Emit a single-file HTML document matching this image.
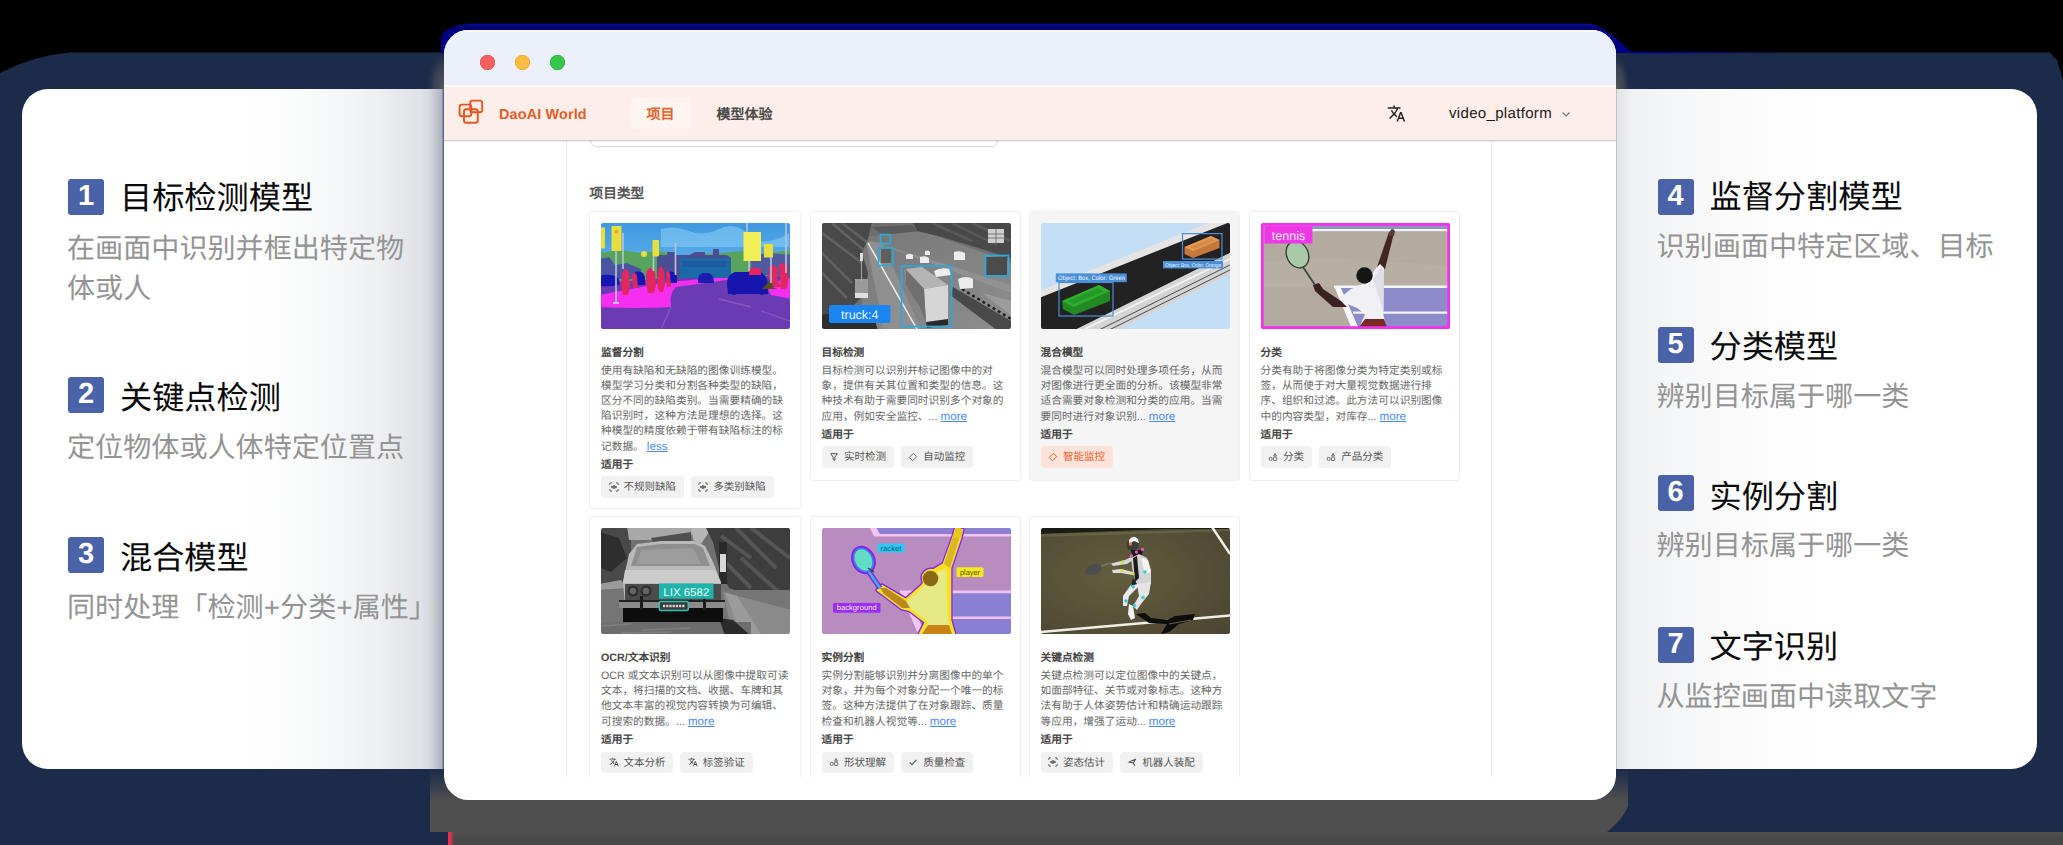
<!DOCTYPE html>
<html lang="zh-CN">
<head>
<meta charset="utf-8">
<title>DaoAI World</title>
<style>
*{box-sizing:border-box;margin:0;padding:0}
html,body{width:2063px;height:845px;overflow:hidden;background:#000}
body{position:relative;font-family:"Liberation Sans",sans-serif;color:#000;text-rendering:geometricPrecision}
.abs{position:absolute}
#bg{position:absolute;left:0;top:0;width:2063px;height:845px}
/* side cards */
#lcard{position:absolute;left:22px;top:89px;width:430px;height:680px;border-radius:26px 0 0 26px;
 background:linear-gradient(90deg,#fff 0,#fff 51.600%,#fafbfb 64.900%,#f3f4f6 76.500%,#eeeff1 83.300%,#e6e8ec 87.900%,#e0e2e7 92.600%,#d8dbe1 94.400%,#c5c9d1 96%,#aeb2ba 97.700%,#4f6590 97.950%,#4f6590 100%)}
#rcard{position:absolute;left:1610px;top:89px;width:427px;height:680px;border-radius:0 26px 26px 0;
 background:linear-gradient(90deg,#8a93a8 0,#8a93a8 1.400%,#e2e3e6 1.600%,#f0f1f3 4.900%,#f5f6f8 15.500%,#fafafa 27.200%,#fdfdfd 38.900%,#fff 50.800%,#fff 100%)}
.item{position:absolute;left:0;width:420px}
.badge{position:absolute;left:0;top:0;width:36px;height:36px;border-radius:3px;background:#4a62a8;color:#fff;
 font-weight:700;font-size:29px;line-height:35px;text-align:center}
.ttl{position:absolute;left:52px;top:-4.800px;font-size:32.200px;line-height:44px;font-weight:500;color:#0a0a0a;letter-spacing:0;white-space:nowrap}
.dsc{position:absolute;left:-1px;top:49px;width:352px;font-size:28.100px;line-height:40px;font-weight:300;color:#949494;letter-spacing:0}
/* window */
#win{position:absolute;left:444px;top:30px;width:1172px;height:770px;border-radius:24.500px;background:#fff;overflow:hidden}
#tbar{position:absolute;left:0;top:0;width:100%;height:56.5px;background:#ecf0fa;box-shadow:inset 0 1.5px 0 #fbfcfe}
.tl{position:absolute;top:25.200px;width:15px;height:15px;border-radius:50%}
#nav{position:absolute;left:-1px;top:57px;width:1174px;height:52.500px;background:#fdeee9;box-shadow:0 1px 1.500px rgba(0,0,0,.26),0 -1.500px 0 #fafbfd}
#content{position:absolute;left:-1.500px;top:110px;width:1174px;height:636.700px;overflow:hidden;background:#fff}
.card{position:absolute;overflow:hidden;width:211.5px;border:1px solid #efefef;border-radius:4px;background:#fff;padding:11px 11px 0 11px;
 font-size:10.700px;line-height:15px;color:#666;box-shadow:0 0 2px rgba(0,0,0,.04)}
.card svg.im{display:block;width:189px;height:106px;border-radius:2px}
.card h4{font-size:10.700px;line-height:15px;font-weight:700;color:#444;margin-top:17px}
.card p{margin-top:3px;letter-spacing:0.02px}
.card a{color:#4a8af0;text-decoration:underline;font-size:11.600px}
.card h5{font-size:10.700px;line-height:15px;font-weight:700;color:#444;margin-top:3px}
.tags{margin-top:3.700px;white-space:nowrap;font-size:0}
.tag{display:inline-block;height:21.600px;line-height:23.200px;padding:0 7.800px;margin-right:6.800px;background:#f1f1f1;border-radius:4px;
 font-size:10.500px;color:#555;vertical-align:top}
.tag svg{width:10px;height:10px;vertical-align:-1.500px;margin-right:4.800px}
</style>
</head>
<body>
<!-- background shapes -->
<svg id="bg" viewBox="0 0 2063 845">
 <defs>
  <linearGradient id="gg" x1="0" y1="0" x2="0" y2="1"><stop offset="0" stop-color="#4f4f4f"/><stop offset=".72" stop-color="#4f4f4f"/><stop offset=".85" stop-color="#494949"/><stop offset="1" stop-color="#464646"/></linearGradient>
 <linearGradient id="fd" x1="0" y1="769" x2="0" y2="800" gradientUnits="userSpaceOnUse"><stop offset="0" stop-color="#4f4f4f" stop-opacity="0"/><stop offset=".5" stop-color="#4f4f4f" stop-opacity=".45"/><stop offset="1" stop-color="#4f4f4f" stop-opacity="1"/></linearGradient>
 <linearGradient id="rs" x1="448" y1="0" x2="454" y2="0" gradientUnits="userSpaceOnUse"><stop offset="0" stop-color="#ea3049"/><stop offset=".35" stop-color="#ea3049"/><stop offset="1" stop-color="#ea3049" stop-opacity="0"/></linearGradient>
 <linearGradient id="bln" x1="1630" y1="0" x2="1780" y2="0" gradientUnits="userSpaceOnUse"><stop offset="0" stop-color="#000090"/><stop offset=".4" stop-color="#000090" stop-opacity=".7"/><stop offset="1" stop-color="#000090" stop-opacity="0"/></linearGradient>
 <radialGradient id="halo"><stop offset="0" stop-color="#6a6660" stop-opacity=".75"/><stop offset=".6" stop-color="#5a5a60" stop-opacity=".45"/><stop offset="1" stop-color="#3a4258" stop-opacity="0"/></radialGradient>
 <linearGradient id="bl" x1="0" y1="23" x2="0" y2="31" gradientUnits="userSpaceOnUse"><stop offset="0" stop-color="#000d7a"/><stop offset=".25" stop-color="#000f92"/><stop offset=".6" stop-color="#00005a"/><stop offset=".85" stop-color="#000082"/><stop offset="1" stop-color="#000082"/></linearGradient>
 </defs>
 <rect width="2063" height="845" fill="#000"/>
 <path d="M0 73 C18 64 40 55 70 52.5 L2050 52.5 L2057 60 L2063 80 L2063 845 L0 845 Z" fill="#1c2b49"/>
 <path d="M430 800 L1628 800 L1628 806 Q1624 818 1607 832 L2063 832 L2063 845 L448 845 L448 832 L430 832 Z" fill="url(#gg)"/>
 <rect x="430" y="769" width="45" height="31.500" fill="url(#fd)"/><rect x="1585" y="769" width="43" height="31.500" fill="url(#fd)"/>
 <rect x="448" y="832" width="6" height="13" fill="url(#rs)"/>
 <!-- blue glow on top of window -->
 <path d="M441 53.500 L441 40 C441.500 30 452 23.500 477 23.500 L1588 23.500 C1600 24 1612 34 1632 52.600 L1616 52.600 L1616 62 L444 62 L444 53.500 Z" fill="url(#bl)"/>
 <rect x="1630" y="51.700" width="150" height="1.700" fill="url(#bln)"/>
 <ellipse cx="444" cy="89" rx="17" ry="38" fill="url(#halo)"/><ellipse cx="1616" cy="89" rx="14" ry="36" fill="url(#halo)"/>
</svg>

<div id="lcard">
 <div class="item" style="left:46px;top:90px"><div class="badge">1</div><div class="ttl" style="top:-3.1px">目标检测模型</div><div class="dsc" style="top:49.5px">在画面中识别并框出特定物体或人</div></div>
 <div class="item" style="left:46px;top:288px"><div class="badge">2</div><div class="ttl" style="top:-1.4px">关键点检测</div><div class="dsc" style="top:51.0px">定位物体或人体特定位置点</div></div>
 <div class="item" style="left:46px;top:448px"><div class="badge">3</div><div class="ttl" style="top:-1.4px">混合模型</div><div class="dsc" style="top:51.0px;width:380px;white-space:nowrap">同时处理「检测+分类+属性」</div></div>
</div>
<div id="rcard">
 <div class="item" style="left:47.500px;top:90px"><div class="badge">4</div><div class="ttl" style="top:-4.0px">监督分割模型</div><div class="dsc" style="top:47.7px;white-space:nowrap">识别画面中特定区域、目标</div></div>
 <div class="item" style="left:47.500px;top:238px"><div class="badge">5</div><div class="ttl" style="top:-2.1px">分类模型</div><div class="dsc" style="top:49.5px">辨别目标属于哪一类</div></div>
 <div class="item" style="left:47.500px;top:386px"><div class="badge">6</div><div class="ttl" style="top:-0.1px">实例分割</div><div class="dsc" style="top:51.4px">辨别目标属于哪一类</div></div>
 <div class="item" style="left:47.500px;top:538px"><div class="badge">7</div><div class="ttl" style="top:-2.1px">文字识别</div><div class="dsc" style="top:49.5px">从监控画面中读取文字</div></div>
</div>

<div id="win">
 <div id="tbar">
  <div class="tl" style="left:35.700px;background:#fc5f5f;box-shadow:inset 0 0 0 .6px #e04848"></div>
  <div class="tl" style="left:70.500px;background:#fdbc40;box-shadow:inset 0 0 0 .6px #e0a030"></div>
  <div class="tl" style="left:105.500px;background:#34c84a;box-shadow:inset 0 0 0 .6px #28a83a"></div>
 </div>
 <div id="content">
<div class="abs" style="left:123px;top:0;width:1px;height:640px;background:#ececec"></div>
<div class="abs" style="left:1048px;top:0;width:1px;height:640px;background:#ececec"></div>
<div class="abs" style="left:147px;top:-20px;width:408px;height:27px;border:1px solid #dcdcdc;border-radius:7px;box-shadow:0 1px 2px rgba(0,0,0,.05)"></div>
<div class="abs" style="left:147px;top:44.800px;font-size:13.700px;line-height:18px;font-weight:700;color:#555;white-space:nowrap">项目类型</div>
<div class="card" style="left:146.5px;top:70.6px;height:298.500px;">
<!--im1--><svg class="im" viewBox="0 0 189 106"><defs><linearGradient id="sky1" x1="0" y1="0" x2="0" y2="1"><stop offset="0" stop-color="#3d97e0"/><stop offset="1" stop-color="#8fd2f6"/></linearGradient><filter id="b1"><feGaussianBlur stdDeviation=".55"/></filter></defs><g filter="url(#b1)"><rect x="-2" y="-2" width="193" height="110" fill="url(#sky1)"/><path d="M60 6q14-4 28 2t30-2 30 6 40-2v14H60z" fill="#7cc4f2" opacity=".7"/><path d="M-2 30 20 27 40 30 60 28 75 33 120 30 140 28 160 31 191 27V62H-2z" fill="#58a45e"/><path d="M56 32h10v-3h8v3h14l6-3h10v3h8v-6h6v6h8l4 3v22H56z" fill="#4a4f92"/><path d="M-2 36 8 34 14 42 26 40 40 46 40 56H-2z" fill="#4a55a0"/><path d="M150 34 165 30 191 32V52H150z" fill="#4f5aa0"/><path d="M-2 60 60 56 130 54 191 52V108H-2z" fill="#6a3bb3"/><path d="M-2 72 30 66 60 60 130 53 134 56 75 64Q68 70 70 84 40 86-2 84z" fill="#f52df0"/><path d="M191 54 165 62 170 72 191 76z" fill="#f52df0"/><path d="M79 35h48q3 0 3 4v16H79z" fill="#1f69a8"/><path d="M82 38h44v6H82z" fill="#18579a" opacity=".7"/><path d="M-2 53Q8 50 16 54 20 58 18 62 8 64-2 63zM34 49q8-2 10 5v8H35zM66 49q8-2 10 5v6h-9z" fill="#1717b4"/><path d="M97 60q-1-9 5-10h5q6 1 6 10z" fill="#1b1bb4"/><path d="M126 60q0-8 8-11h24q8 2 9 12v10h-4q-2 2-5 0h-22q-3 2-6 0h-3z" fill="#1717ae"/><g fill="#e2255f"><path d="M21 50q4-8 7 0l1 12-2 10h-5l-2-10zM31 52q3-5 5 1l1 12h-5zM45 50q4-10 9 0l1 12-2 8h-6l-2-10zM57 47q4-7 6 1l1 12-2 9h-4l-2-10zM65 50q2-5 4 1l1 13h-4zM148 46q6-3 12 0v6h-12zM168 44q6-4 9 2l-1 10 4 8h-8l-4-8zM178 42q6-5 9 2v16l-2 6h-5z"/></g><path d="M161 66 170 56 172 64 176 66z" fill="#55501e"/><g fill="#e6df3c"><rect x="10.500" y="3" width="10" height="25" rx="1"/><rect x="-1" y="4.500" width="5" height="21"/><rect x="51.500" y="17" width="6.500" height="16.500" rx="1"/><rect x="142.500" y="9" width="17.500" height="29" fill="#f2ee55"/><rect x="163" y="21" width="9" height="13.500"/><circle cx="43" cy="31" r="3"/></g><circle cx="15.500" cy="8.500" r="2" fill="#f5a030"/><g stroke="#b9c2dc" stroke-width="1.600" fill="none"><path d="M15 28V80M52.500 33V48M74.500 20V52M146 0V9M148 38V48M170 34V60M185 0V50M22 10V46"/></g><path d="M12 79h6v2h-6z" fill="#b9c2dc"/><g stroke="#8a62c8" stroke-width="1.300" opacity=".8"><path d="M70 84 60 106M118 76 150 84M160 88 189 98"/></g></g></svg><!--/im1-->
<h4>监督分割</h4><p>使用有缺陷和无缺陷的图像训练模型。模型学习分类和分割各种类型的缺陷，区分不同的缺陷类别。当需要精确的缺陷识别时，这种方法是理想的选择。这种模型的精度依赖于带有缺陷标注的标记数据。 <a>less</a></p><h5>适用于</h5>
<div class="tags"><span class="tag"><svg viewBox="0 0 12 12" fill="none" stroke="#555" stroke-width="1.200"><path d="M1 3.500V2.200A1.200 1.200 0 0 1 2.200 1H3.500M8.500 1H9.800A1.200 1.200 0 0 1 11 2.200V3.500M11 8.500V9.800A1.200 1.200 0 0 1 9.800 11H8.500M3.500 11H2.200A1.200 1.200 0 0 1 1 9.800V8.500"/><path d="M2.600 6Q6 2.600 9.400 6 6 9.400 2.600 6Z"/><circle cx="6" cy="6" r=".7" fill="#555"/></svg>不规则缺陷</span><span class="tag"><svg viewBox="0 0 12 12" fill="none" stroke="#555" stroke-width="1.200"><path d="M1 3.500V2.200A1.200 1.200 0 0 1 2.200 1H3.500M8.500 1H9.800A1.200 1.200 0 0 1 11 2.200V3.500M11 8.500V9.800A1.200 1.200 0 0 1 9.800 11H8.500M3.500 11H2.200A1.200 1.200 0 0 1 1 9.800V8.500"/><path d="M2.600 6Q6 2.600 9.400 6 6 9.400 2.600 6Z"/><circle cx="6" cy="6" r=".7" fill="#555"/></svg>多类别缺陷</span></div>
</div>
<div class="card" style="left:367px;top:70.6px;height:270.500px;">
<!--im2--><svg class="im" viewBox="0 0 189 106"><defs><filter id="b2"><feGaussianBlur stdDeviation=".7"/></filter><linearGradient id="rd2" x1="0" y1="0" x2="1" y2="1"><stop offset="0" stop-color="#777"/><stop offset="1" stop-color="#8e8e8e"/></linearGradient></defs><g filter="url(#b2)"><rect x="-2" y="-2" width="193" height="110" fill="#6e6e6e"/><path d="M40 14 100 8 191 40V108H40z" fill="url(#rd2)"/><path d="M44 18 60 20 100 108H62z" fill="#8f8f8f"/><path d="M46 17 189 62V70L60 22z" fill="#9a9a9a" opacity=".6"/><path d="M-2 -2H50L46 16 40 30 46 50 44 70 30 84 10 90-2 92z" fill="#4a4a4a"/><path d="M0 10 40 40M10 0 45 30M0 30 30 60M0 50 25 75M20 0 46 20" stroke="#777" stroke-width="2.500" opacity=".55"/><path d="M90-2H191V36L160 26 120 14 95 8z" fill="#4a4a4a"/><path d="M110 0 150 18M130 0 175 22M150 0 189 18" stroke="#6a6a6a" stroke-width="2.500" opacity=".5"/><path d="M50 4 90 2 95 8 60 12z" fill="#5a5a5a"/><path d="M-2 92 10 90 30 84 50 86 56 108H-2z" fill="#2e2e2e"/><path d="M131 64 189 98V108H176L128 72z" fill="#4a4a4a"/><path d="M140 66 189 96" stroke="#222" stroke-width="2.500" stroke-dasharray="3 3"/><path d="M160 70 189 78V92z" fill="#a0a0a0" opacity=".8"/><path d="M46 20 96 108" stroke="#f0f0f0" stroke-width="1.500" fill="none"/><path d="M82 47 100 44 127 62V100L106 103 100 84 84 62z" fill="#8a8a8a"/><path d="M84 46 100 44 126 62 102 66z" fill="#b4b4b4"/><path d="M102 66 126 62V98L104 101z" fill="#d6d6d6"/><path d="M84 47 102 66 104 100 98 84 84 62z" fill="#6f6f6f"/><path d="M104 99 126 96V102L105 105z" fill="#2a2a2a"/><rect x="59" y="26" width="10" height="14" fill="#5e5e5e"/><rect x="60" y="13" width="6" height="6" fill="#777"/><rect x="164" y="34" width="21" height="18" fill="#4c4c4c"/><path d="M132 29q6-2 11 1v7h-11zM136 56q8-4 15 0v9l-13 1zM112 48q6-4 15-2l2 6-15 2zM84 32q4-2 7 0v4h-7zM98 34q6-2 9 1v5h-9zM103 28q4-1 5 1v3h-5z" fill="#ededed"/><rect x="166" y="6" width="16" height="14" fill="#cfcfcf"/><path d="M166 11h16M166 15h16M174 6v14" stroke="#666" stroke-width=".8"/><rect x="33" y="56" width="13" height="18" fill="#9a9a9a"/><rect x="33" y="70" width="13" height="5" fill="#e0e0e0"/><rect x="38" y="30" width="3" height="8" fill="#ddd"/><path d="M39.500 38V58" stroke="#bbb" stroke-width=".8"/></g><g fill="none" stroke="#29a9dc" stroke-width="1.700"><rect x="79.500" y="43" width="50" height="60.500"/><rect x="56.500" y="25" width="14.500" height="17.500"/><rect x="58.500" y="11.500" width="10" height="9"/><rect x="163.500" y="32.500" width="23" height="20.500"/></g><rect x="7" y="82" width="61.500" height="18" rx="2" fill="#1b86f2"/><text x="37.800" y="96" font-family="Liberation Sans,sans-serif" font-size="12.500" fill="#eaf6ff" text-anchor="middle">truck:4</text></svg><!--/im2-->
<h4>目标检测</h4><p>目标检测可以识别并标记图像中的对象，提供有关其位置和类型的信息。这种技术有助于需要同时识别多个对象的应用，例如安全监控、... <a>more</a></p><h5>适用于</h5>
<div class="tags"><span class="tag"><svg viewBox="0 0 12 12" fill="none" stroke="#555" stroke-width="1.2"><path d="M2 2h8L7 6.200V10L5 9V6.200Z"/></svg>实时检测</span><span class="tag"><svg viewBox="0 0 12 12" fill="none" stroke="#666" stroke-width="1.1"><path d="M6.500 1.500 10.500 5.500 5.500 10.500 1.500 6.500Z"/></svg>自动监控</span></div>
</div>
<div class="card" style="left:586px;top:70.6px;height:270.500px;background:#f5f5f5;border-color:#f0f0f0;">
<!--im3--><svg class="im" viewBox="0 0 189 106"><defs><filter id="b3"><feGaussianBlur stdDeviation=".5"/></filter></defs><g filter="url(#b3)"><rect x="-2" y="-2" width="193" height="110" fill="#c3def5"/><path d="M-2 68 172-2H191L-2 76z" fill="#e4e4e4"/><path d="M-2 75 189-1V30L32 108H-2z" fill="#232323"/><path d="M32 108 191 29V50L74 108z" fill="#d4d4d4"/><path d="M56 108 191 41M66 108 191 46" stroke="#3a3a3a" stroke-width=".9" fill="none"/><path d="M44 106 191 35" stroke="#f4f4f4" stroke-width="1.600" fill="none"/><path d="M21 78 58 62 69 68V78L33 92 22 86z" fill="#238a23"/><path d="M21 78 58 62 69 68 33 84z" fill="#2fae2f"/><path d="M27 78 57 65 63 68.500 33 81z" fill="#279a27"/><path d="M143.500 24 170 13 178.500 17V25L152 35 143.500 31z" fill="#c4783a"/><path d="M143.500 24 170 13 178.500 17 152 28z" fill="#e29a55"/><path d="M149 24 170 15.500 174 17.500 153 26z" fill="#d58a47"/></g><rect x="18" y="59.500" width="54" height="33.500" fill="none" stroke="#4a8fd8" stroke-width="1.200"/><rect x="14.800" y="50.400" width="71" height="8.800" fill="#4a8fd8"/><text x="17" y="57.400" font-family="Liberation Sans,sans-serif" font-size="6.300" fill="#eef5ff" textLength="67" lengthAdjust="spacingAndGlyphs">Object: Box, Color: Green</text><rect x="141.500" y="10.600" width="39.500" height="25.500" fill="none" stroke="#4a8fd8" stroke-width="1.200"/><rect x="122" y="38" width="60" height="7.400" fill="#4a8fd8"/><text x="124" y="44" font-family="Liberation Sans,sans-serif" font-size="5.400" fill="#eef5ff" textLength="56" lengthAdjust="spacingAndGlyphs">Object: Box, Color: Orange</text></svg><!--/im3-->
<h4>混合模型</h4><p>混合模型可以同时处理多项任务，从而对图像进行更全面的分析。该模型非常适合需要对象检测和分类的应用。当需要同时进行对象识别... <a>more</a></p><h5>适用于</h5>
<div class="tags"><span class="tag" style="background:#fde3d9;color:#e8622c;font-weight:500"><svg viewBox="0 0 12 12" fill="none" stroke="#e8622c" stroke-width="1.2"><path d="M6.500 1.500 10.500 5.500 5.500 10.500 1.500 6.500Z"/></svg>智能监控</span></div>
</div>
<div class="card" style="left:806px;top:70.6px;height:270.500px;">
<!--im4--><svg class="im" viewBox="0 0 189 106"><defs><filter id="b4"><feGaussianBlur stdDeviation=".5"/></filter></defs><g filter="url(#b4)"><rect x="-2" y="-2" width="193" height="110" fill="#b3aba0"/><path d="M0 40Q60 30 189 44V64H0z" fill="#bab2a6" opacity=".6"/><rect x="50" y="0" width="140" height="6.500" fill="#8b98bb"/><rect x="50" y="6" width="140" height="2.200" fill="#f3f3f3"/><path d="M78 64H189V106H97z" fill="#8d8bc9"/><path d="M73 62.500H189V65H73z" fill="#f4f4f4"/><path d="M92 88.500H189V90.800H92z" fill="#f4f4f4"/><path d="M73 63H79L98 106H91z" fill="#f6f6f6"/><path d="M116 44 128 9 133 10 124 46z" fill="#432823"/><path d="M128 10q3-7 6-2l-1 5h-5z" fill="#5a3a30"/><path d="M80 78 62 66 58 60 52 62 54 68 72 84 86 84z" fill="#3a2320"/><path d="M79 75 90 66 99 62 108 59 114 46 119 41 123 45 122 90 125 103H99L104 91 96 85 84 80z" fill="#f1f0f4"/><path d="M112 56 120 44 123 48V90z" fill="#dcdbe6" opacity=".8"/><circle cx="103.500" cy="52.500" r="8.200" fill="#171717"/><path d="M98 104 104 96 123 96 126 104z" fill="#7a2a28"/><g transform="rotate(-24 36.500 31.500)"><ellipse cx="36.500" cy="31.500" rx="10.800" ry="13.800" fill="#a9c9a8" stroke="#2e3a30" stroke-width="1.300"/></g><path d="M42 44 54 62" stroke="#444" stroke-width="1.800" fill="none"/></g><rect x="1.200" y="1.200" width="186.600" height="103.600" rx="1" fill="none" stroke="#f72df2" stroke-width="3"/><rect x="3.400" y="3" width="48" height="17.500" fill="#ee38e8"/><text x="27.500" y="17" font-family="Liberation Sans,sans-serif" font-size="12.500" fill="#fbe9fb" text-anchor="middle">tennis</text></svg><!--/im4-->
<h4>分类</h4><p>分类有助于将图像分类为特定类别或标签，从而便于对大量视觉数据进行排序、组织和过滤。此方法可以识别图像中的内容类型，对库存... <a>more</a></p><h5>适用于</h5>
<div class="tags"><span class="tag"><svg viewBox="0 0 12 12" fill="none" stroke="#666" stroke-width="1.1"><circle cx="3.200" cy="8.200" r="1.900"/><rect x="6.500" y="6.200" width="4" height="4" rx=".6"/><path d="M8.500 1.800 10.200 4.800H6.800Z"/></svg>分类</span><span class="tag"><svg viewBox="0 0 12 12" fill="none" stroke="#666" stroke-width="1.1"><circle cx="3.200" cy="8.200" r="1.900"/><rect x="6.500" y="6.200" width="4" height="4" rx=".6"/><path d="M8.500 1.800 10.200 4.800H6.800Z"/></svg>产品分类</span></div>
</div>
<div class="card" style="left:146.5px;top:376.2px;height:275px;">
<!--im5--><svg class="im" viewBox="0 0 189 106"><defs><filter id="b5"><feGaussianBlur stdDeviation=".7"/></filter></defs><g filter="url(#b5)"><rect x="-2" y="-2" width="193" height="110" fill="#707070"/><path d="M-2-2H30V56H-2z" fill="#4a4a4a"/><path d="M0 4 18 10 26 30 10 44 0 40z" fill="#2e2e2e"/><path d="M26-2H95L88 12H28z" fill="#a8a8a8"/><path d="M50 10 90 4 90 14 52 14z" fill="#505050"/><path d="M90-2 112-2 100 16 92 12z" fill="#b5b5b5"/><path d="M104-2H191V80L160 72 128 60 118 40 112 14z" fill="#3e3e3e"/><path d="M120 8 150 30M135 0 175 40M150 0 189 30M120 30 150 60M140 30 180 66" stroke="#686868" stroke-width="4" opacity=".55"/><path d="M118 14H126V56H118z" fill="#2a2a2a"/><path d="M119 26H125V44H119z" fill="#d8d8d8"/><path d="M-2 56 20 52 26 60-2 62z" fill="#9a9a9a"/><path d="M-2 62H191V108H-2z" fill="#747474"/><path d="M122 64 160 74 191 82V108H150L128 92z" fill="#8a8a8a"/><path d="M124 64 136 68 160 106H140z" fill="#a6a6a6" opacity=".6"/><path d="M-2 94H150V108H-2z" fill="#6d6d6d"/><path d="M118 90 132 92 150 108H124z" fill="#2a2a2a"/><path d="M0 98 30 96M40 102 90 100M20 105 70 104" stroke="#8a8a8a" stroke-width="1.500" opacity=".6"/><path d="M22 54 28 26 36 16 60 13H94L104 18 112 34 120 54 120 78 24 78z" fill="#b9b9b9"/><path d="M30 38 36 19 60 16H94L102 20 109 38z" fill="#8f8f8f"/><path d="M36 36 40 22 92 20 100 36z" fill="#9d9d9d"/><path d="M24 42 114 42 120 55 22 55z" fill="#cbcbcb"/><path d="M24 56H120V72H24z" fill="#4b4b4b"/><circle cx="32" cy="63" r="5.500" fill="#2d2d2d"/><circle cx="45" cy="63" r="5.500" fill="#2d2d2d"/><circle cx="32" cy="63" r="3.200" fill="#666"/><circle cx="45" cy="63" r="3.200" fill="#666"/><path d="M18 72 124 72 124 80 18 80z" fill="#8c8c8c"/><path d="M18 72H124V74H18z" fill="#222"/><path d="M22 80H122V94H22z" fill="#111"/><path d="M39 68H42V82H39zM102 70H105V82H102z" fill="#1f1f1f"/></g><rect x="58" y="55.500" width="54.500" height="15.200" fill="#1fb4ab"/><text x="85.300" y="67.600" font-family="Liberation Sans,sans-serif" font-size="11.200" fill="#e6fbf8" text-anchor="middle" textLength="46" lengthAdjust="spacingAndGlyphs">LIX 6582</text><rect x="58.300" y="73.400" width="29" height="9" rx="1.500" fill="#3a3a3a" stroke="#2cc0b6" stroke-width="1.500"/><path d="M62 78H84" stroke="#d8d8d8" stroke-width="2.600" stroke-dasharray="2.200 1"/></svg><!--/im5-->
<h4>OCR/文本识别</h4><p>OCR 或文本识别可以从图像中提取可读文本，将扫描的文档、收据、车牌和其他文本丰富的视觉内容转换为可编辑、可搜索的数据。... <a>more</a></p><h5>适用于</h5>
<div class="tags"><span class="tag"><svg viewBox="0 0 24 24" fill="#444"><path d="M12.870 15.070l-2.540-2.510.030-.030A17.500 17.500 0 0 0 14.070 6H17V4h-7V2H8v2H1v2h11.170A15.600 15.600 0 0 1 9 11.350 15.700 15.700 0 0 1 6.690 8h-2a17.600 17.600 0 0 0 2.980 4.560l-5.090 5.020L4 19l5-5 3.110 3.110.760-2.040zM18.500 10h-2L12 22h2l1.120-3h4.750L21 22h2l-4.500-12zm-2.620 7l1.620-4.330L19.120 17h-3.240z"/></svg>文本分析</span><span class="tag"><svg viewBox="0 0 24 24" fill="#444"><path d="M12.870 15.070l-2.540-2.510.030-.030A17.500 17.500 0 0 0 14.070 6H17V4h-7V2H8v2H1v2h11.170A15.600 15.600 0 0 1 9 11.350 15.700 15.700 0 0 1 6.690 8h-2a17.600 17.600 0 0 0 2.980 4.560l-5.090 5.020L4 19l5-5 3.110 3.110.760-2.040zM18.500 10h-2L12 22h2l1.120-3h4.750L21 22h2l-4.500-12zm-2.620 7l1.620-4.330L19.120 17h-3.240z"/></svg>标签验证</span></div>
</div>
<div class="card" style="left:367px;top:376.2px;height:275px;">
<!--im6--><svg class="im" viewBox="0 0 189 106"><defs><filter id="b6"><feGaussianBlur stdDeviation=".6"/></filter></defs><g filter="url(#b6)"><rect x="-2" y="-2" width="193" height="110" fill="#b98cc0"/><path d="M54-2H191V8H58z" fill="#8b7fd2"/><path d="M47-2H53L58 6H191V8.500H52z" fill="#f3c4f1"/><path d="M125 65H191V108H125z" fill="#8a80d3"/><path d="M86 65H98L112 108H104z" fill="#8a80d3"/><path d="M78 62.500H191V65.200H78z" fill="#f2c2f2"/><path d="M96 88.500H191V91H96z" fill="#f0c0f0"/><path d="M78 63H85L103 106H96z" fill="#f4c6f4"/><g stroke="#8a1ff2" stroke-width="5.200" stroke-linejoin="round" fill="#8a1ff2"><path d="M80 80 64 68 56 62 60 58 84 72 100 58 112 42 122 36 132 8 134 1 140 2 138 10 128 40 128 92 132 106H98L104 94 88 82z"/><circle cx="109" cy="50" r="8"/></g><g stroke="#f6e21c" stroke-width="2.600" stroke-linejoin="round" fill="#f6e21c"><path d="M80 80 64 68 56 62 60 58 84 72 100 58 112 42 122 36 132 8 134 1 140 2 138 10 128 40 128 92 132 106H98L104 94 88 82z"/><circle cx="109" cy="50" r="8"/></g><path d="M84 74 100 60 112 46 124 40 126 92 130 106H100L106 94 88 80z" fill="#e6ea84"/><path d="M122 36 132 6 138 8 128 40z" fill="#d7b822"/><path d="M133 1q5-3 8 2l-2 7h-7z" fill="#e9c81e"/><path d="M80 80 62 66 58 60 64 60 84 73 88 80z" fill="#b98a1c"/><circle cx="108.500" cy="50.500" r="7.800" fill="#8a6a14"/><path d="M100 106 106 97 127 97 130 106z" fill="#c98218"/><g transform="rotate(-26 41.500 32)"><ellipse cx="41.500" cy="32" rx="11.800" ry="14.800" fill="#8a1ff2"/><ellipse cx="41.500" cy="32" rx="10" ry="13" fill="#3a7fe6"/><ellipse cx="41.500" cy="32" rx="8.300" ry="11.300" fill="#62dcc6"/></g><path d="M47 44 58 60" stroke="#8a1ff2" stroke-width="5.500" fill="none"/><path d="M47 44 58 60" stroke="#30b8d8" stroke-width="2.600" fill="none"/><path d="M46 40 52 44" stroke="#2a3a40" stroke-width="1.100"/></g><rect x="55.600" y="15.400" width="27" height="9" rx="1.200" fill="#2fc6f1"/><text x="69" y="22.600" font-family="Liberation Sans,sans-serif" font-size="7.600" fill="#1a5a78" text-anchor="middle" textLength="21" lengthAdjust="spacingAndGlyphs">racket</text><rect x="134.500" y="39.300" width="27" height="9.800" rx="1.200" fill="#f5e81e"/><text x="148" y="46.600" font-family="Liberation Sans,sans-serif" font-size="7.600" fill="#5a5210" text-anchor="middle" textLength="20" lengthAdjust="spacingAndGlyphs">player</text><rect x="11" y="75" width="47.500" height="9.800" rx="1.200" fill="#9a2ff2"/><text x="34.700" y="82.400" font-family="Liberation Sans,sans-serif" font-size="7.600" fill="#f3e6ff" text-anchor="middle" textLength="40" lengthAdjust="spacingAndGlyphs">background</text></svg><!--/im6-->
<h4>实例分割</h4><p>实例分割能够识别并分离图像中的单个对象，并为每个对象分配一个唯一的标签。这种方法提供了在对象跟踪、质量检查和机器人视觉等... <a>more</a></p><h5>适用于</h5>
<div class="tags"><span class="tag"><svg viewBox="0 0 12 12" fill="none" stroke="#666" stroke-width="1.1"><circle cx="3.200" cy="8.200" r="1.900"/><rect x="6.500" y="6.200" width="4" height="4" rx=".6"/><path d="M8.500 1.800 10.200 4.800H6.800Z"/></svg>形状理解</span><span class="tag"><svg viewBox="0 0 12 12" fill="none" stroke="#555" stroke-width="1.3"><path d="M2 6.500 4.800 9.200 10 3.500"/></svg>质量检查</span></div>
</div>
<div class="card" style="left:586px;top:376.2px;height:275px;">
<!--im7--><svg class="im" viewBox="0 0 189 106"><defs><filter id="b7"><feGaussianBlur stdDeviation=".6"/></filter><radialGradient id="g7" cx=".4" cy=".45" r=".75"><stop offset="0" stop-color="#635d40"/><stop offset="1" stop-color="#4c4730"/></radialGradient></defs><g filter="url(#b7)"><rect x="-2" y="-2" width="193" height="110" fill="url(#g7)"/><path d="M-2-2H191V1L-2 6z" fill="#1d1b12"/><path d="M-2 6 120 1 191 1V3L-2 9z" fill="#7a7454" opacity=".5"/><path d="M0 104 189 87.500" stroke="#efefe6" stroke-width="2.300" fill="none"/><path d="M171-1 189 26" stroke="#f2f2ea" stroke-width="2.400" fill="none"/><path d="M95 86 104 85 110 90 126 92 134 88 154 86 152 92 138 96 128 104 120 106 126 96 108 95z" fill="#0c0b08"/><path d="M128 96 150 92" stroke="#6a6648" stroke-width="1"/><ellipse cx="52.500" cy="41.500" rx="8.500" ry="5.200" transform="rotate(-18 52.500 41.500)" fill="#4e4e4e"/><path d="M60 38 70 35" stroke="#777" stroke-width="1.600"/><path d="M70 35.500 84 32 90 29 92 32 86 36 72 38z" fill="#d8d8d8"/><path d="M71 42 80 41 92 44 92 47 80 45 72 45z" fill="#dcdcdc"/><circle cx="91.500" cy="17" r="6" fill="#3a3a3a"/><path d="M88 12q4-6 9-1l1 4-5-2-5 3z" fill="#f4f4f4"/><circle cx="89.500" cy="16" r="1.700" fill="#e87838"/><path d="M90 22 102 22 100 30 92 30z" fill="#141414"/><path d="M90 30 98 26 106 30 110 42 110 56 96 58 92 46z" fill="#d4d4d4"/><path d="M92 30 96 28 98 50 94 54z" fill="#1c1c1c"/><path d="M100 30 107 32 110 44 104 46z" fill="#f3f3f3"/><path d="M96 56 110 54 108 66 100 76 96 82 92 78 98 68z" fill="#e4e4e4"/><path d="M92 54 98 58 88 68 86 78 82 78 82 68z" fill="#e9e9e9"/><path d="M88 76 92 78 94 90 90 92 87 86z" fill="#f4f4f4"/><path d="M92 50 96 56 90 58z" fill="#222"/></g><g><circle cx="95.500" cy="24" r="1.700" fill="#f04fc0"/><circle cx="101.500" cy="21.500" r="1.700" fill="#f04fc0"/><circle cx="90.500" cy="28" r="1.700" fill="#f04fc0"/><circle cx="81" cy="34" r="1.600" fill="#d8e02a"/><circle cx="81" cy="42.500" r="1.600" fill="#d8e02a"/><circle cx="92" cy="45.500" r="1.600" fill="#d8e02a"/><circle cx="104" cy="44" r="1.800" fill="#3cc8e0"/><circle cx="92" cy="58.500" r="1.800" fill="#3cc8e0"/><circle cx="102" cy="69.500" r="1.800" fill="#3cc8e0"/><circle cx="85" cy="73" r="1.800" fill="#3cc8e0"/><circle cx="93.500" cy="77.500" r="1.800" fill="#3cc8e0"/></g></svg><!--/im7-->
<h4>关键点检测</h4><p>关键点检测可以定位图像中的关键点，如面部特征、关节或对象标志。这种方法有助于人体姿势估计和精确运动跟踪等应用，增强了运动... <a>more</a></p><h5>适用于</h5>
<div class="tags"><span class="tag"><svg viewBox="0 0 12 12" fill="none" stroke="#555" stroke-width="1.200"><path d="M1 3.500V2.200A1.200 1.200 0 0 1 2.200 1H3.500M8.500 1H9.800A1.200 1.200 0 0 1 11 2.200V3.500M11 8.500V9.800A1.200 1.200 0 0 1 9.800 11H8.500M3.500 11H2.200A1.200 1.200 0 0 1 1 9.800V8.500"/><path d="M2.600 6Q6 2.600 9.400 6 6 9.400 2.600 6Z"/><circle cx="6" cy="6" r=".7" fill="#555"/></svg>姿态估计</span><span class="tag"><svg viewBox="0 0 12 12" fill="none" stroke="#555" stroke-width="1.3"><path d="M10.500 2.500 2.500 6l5 1.200L9.500 10.500M7.500 7.200 10.500 2.500"/></svg>机器人装配</span></div>
</div>
</div>
 <div id="nav">
  <svg class="abs" style="left:0;top:0;width:60px;height:53px" viewBox="0 0 60 53" fill="none" stroke="#e8561f" stroke-width="1.9">
   <rect x="27.2" y="13.6" width="12" height="11.6" rx="2.2"/><rect x="16.6" y="17.6" width="11.7" height="11.6" rx="2.2"/><rect x="21" y="22.3" width="13.8" height="13.4" rx="2.2"/>
  </svg>
  <div class="abs" style="left:56px;top:18px;font-size:14.400px;line-height:20px;font-weight:700;color:#e45c28;white-space:nowrap;letter-spacing:.15px">DaoAI World</div>
  <div class="abs" style="left:187.5px;top:11px;width:60px;height:31px;border-radius:5px;background:#fef5f1"></div>
  <div class="abs" style="left:203.5px;top:17px;font-size:14px;line-height:20px;font-weight:700;color:#e8622c;white-space:nowrap">项目</div>
  <div class="abs" style="left:273.5px;top:17px;font-size:14px;line-height:20px;font-weight:700;color:#4a4a4a;white-space:nowrap">模型体验</div>
  <svg class="abs" style="left:943.500px;top:17px;width:19px;height:19px" viewBox="0 0 24 24" fill="#222"><path d="M12.87 15.07l-2.54-2.51.03-.03A17.5 17.5 0 0 0 14.07 6H17V4h-7V2H8v2H1v2h11.17A15.6 15.6 0 0 1 9 11.35 15.7 15.7 0 0 1 6.69 8h-2a17.6 17.6 0 0 0 2.98 4.56l-5.09 5.02L4 19l5-5 3.11 3.11.76-2.04zM18.5 10h-2L12 22h2l1.12-3h4.75L21 22h2l-4.5-12zm-2.62 7l1.62-4.33L19.12 17h-3.24z"/></svg>
  <div class="abs" style="left:1006px;top:17px;font-size:15px;line-height:20px;color:#1a1a1a;white-space:nowrap;letter-spacing:.33px">video_platform</div>
  <svg class="abs" style="left:1118px;top:22px;width:10px;height:10px" viewBox="0 0 10 10" fill="none" stroke="#777" stroke-width="1.2"><path d="M1.5 3.5 L5 7 L8.5 3.5"/></svg>
 </div>
</div>
</body>
</html>
